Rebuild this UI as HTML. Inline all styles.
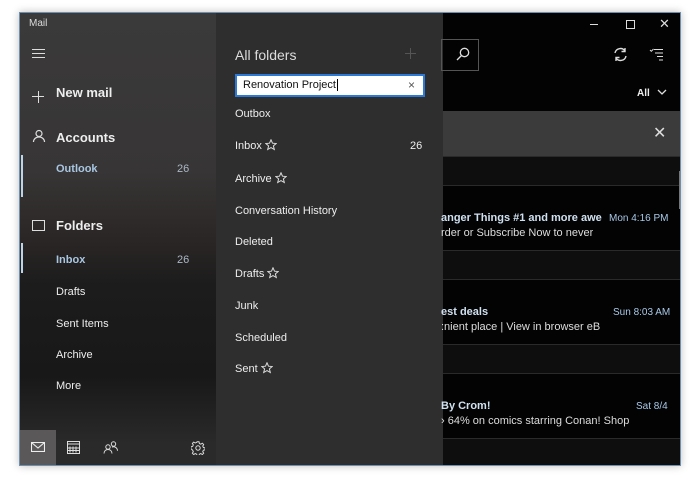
<!DOCTYPE html>
<html><head><style>
*{margin:0;padding:0;box-sizing:border-box}
body{width:698px;height:481px;background:#fff;font-family:"Liberation Sans",sans-serif;position:relative;overflow:hidden}
.win{position:absolute;left:19px;top:12px;width:662px;height:454px;background:#000;box-shadow:0 0 8px rgba(0,0,0,.25);border:1px solid #6d8fb0;overflow:hidden}
.side{position:absolute;left:0;top:0;width:196px;height:454px;background:linear-gradient(180deg,#3b3a3a 0%,#373535 35%,#2a2625 50%,#1c1c1c 60%,#181818 80%,#2a2a2a 95%)}
.t{position:absolute;color:#eee;white-space:nowrap;line-height:14px}
.fp{position:absolute;left:196px;top:0;width:227px;height:454px;background:#2e2e2e}
.fp .t{font-size:11px}
.ml{position:absolute;left:423px;top:0;width:239px;height:454px;background:#030303}
.ml .t{font-size:11px;overflow:hidden}
.band{position:absolute;left:0;width:239px;height:30px;background:#0e0e0e;border-top:1px solid #2a2a2a;border-bottom:1px solid #2a2a2a}
.st{display:inline-block;vertical-align:-2px;margin-left:3px}
</style></head><body>
<div class="win">
<div class="side">
<div class="t" style="left:9px;top:4px;font-size:10px;color:#ddd">Mail</div>
<div style="position:absolute;left:12px;top:36px;width:13px;height:1px;background:#ddd;box-shadow:0 4px 0 #ddd,0 8px 0 #ddd"></div>
<div style="position:absolute;left:12px;top:83px;width:12px;height:1.2px;background:#ddd"></div>
<div style="position:absolute;left:17.5px;top:77.5px;width:1.2px;height:12px;background:#ddd"></div>
<div class="t" style="left:36px;top:73px;font-size:13px;font-weight:bold">New mail</div>
<svg style="position:absolute;left:12px;top:116px" width="14" height="14" viewBox="0 0 14 14" fill="none" stroke="#ddd" stroke-width="1.2"><circle cx="7" cy="4.5" r="3"/><path d="M1.5 13c0-3 2.5-5 5.5-5s5.5 2 5.5 5"/></svg>
<div class="t" style="left:36px;top:118px;font-size:13px;font-weight:bold">Accounts</div>
<div style="position:absolute;left:1px;top:142px;width:2px;height:42px;background:#bcd4ea"></div>
<div class="t" style="left:36px;top:149px;font-size:11px;color:#a9c6e2;font-weight:bold">Outlook</div>
<div class="t" style="left:157px;top:149px;font-size:11px;color:#aab8c6">26</div>
<div style="position:absolute;left:12px;top:207px;width:13px;height:11px;border:1.2px solid #ddd"></div>
<div class="t" style="left:36px;top:206px;font-size:13px;font-weight:bold">Folders</div>
<div style="position:absolute;left:1px;top:230px;width:2px;height:30px;background:#bcd4ea"></div>
<div class="t" style="left:36px;top:240px;font-size:11px;color:#a9c6e2;font-weight:bold">Inbox</div>
<div class="t" style="left:157px;top:240px;font-size:11px;color:#aab8c6">26</div>
<div class="t" style="left:36px;top:272px;font-size:11px">Drafts</div>
<div class="t" style="left:36px;top:304px;font-size:11px">Sent Items</div>
<div class="t" style="left:36px;top:335px;font-size:11px">Archive</div>
<div class="t" style="left:36px;top:366px;font-size:11px">More</div>
<div style="position:absolute;left:0;top:417px;width:36px;height:37px;background:#5a5858"></div>
<svg style="position:absolute;left:11px;top:429px" width="14" height="10" viewBox="0 0 14 10" fill="none" stroke="#eee" stroke-width="1.1"><rect x=".5" y=".5" width="13" height="9"/><path d="M.5 .5L7 6l6.5-5.5"/></svg>
<svg style="position:absolute;left:47px;top:428px" width="13" height="13" viewBox="0 0 13 13" fill="none" stroke="#ddd" stroke-width="1"><rect x=".5" y=".5" width="12" height="12"/><path d="M.5 3h12M3 5.5v6M6 5.5v6M9 5.5v6M1 7h11M1 9.5h11"/></svg>
<svg style="position:absolute;left:83px;top:428px" width="15" height="13" viewBox="0 0 15 13" fill="none" stroke="#ddd" stroke-width="1"><circle cx="5" cy="6" r="2.2"/><path d="M1 12.5c0-2.5 1.8-4 4-4s4 1.5 4 4"/><circle cx="10.5" cy="3" r="2.2"/><path d="M9 6.2c.5-.3 1-.4 1.5-.4 2.2 0 4 1.5 4 4"/></svg>
<svg style="position:absolute;left:171px;top:428px" width="14" height="14" viewBox="0 0 14 14" fill="none" stroke="#ddd" stroke-width="1"><circle cx="7" cy="7" r="2.2"/><path d="M6 .8h2l.4 1.8 1.5.7 1.6-1 1.4 1.4-1 1.6.7 1.5 1.8.4v2l-1.8.4-.7 1.5 1 1.6-1.4 1.4-1.6-1-1.5.7-.4 1.8H6l-.4-1.8-1.5-.7-1.6 1-1.4-1.4 1-1.6-.7-1.5L-.4 8V6l1.8-.4.7-1.5-1-1.6 1.4-1.4 1.6 1 1.5-.7z" transform="translate(.3 0) scale(.96)"/></svg>
</div>
<div class="fp">
<div class="t" style="left:19px;top:35px;font-size:14px;color:#ddd">All folders</div>
<div style="position:absolute;left:189px;top:40px;width:11px;height:1px;background:#555"></div>
<div style="position:absolute;left:194px;top:35px;width:1px;height:11px;background:#555"></div>
<div style="position:absolute;left:19px;top:61px;width:190px;height:23px;background:#fff;border:2px solid #2c7ad6"></div>
<div class="t" style="left:27px;top:65px;font-size:11px;color:#111">Renovation Project<span style="border-left:1px solid #000;margin-left:1px"></span></div>
<div class="t" style="left:192px;top:65px;font-size:12px;color:#555">×</div>
<svg width="0" height="0" style="position:absolute"><defs><symbol id="s" viewBox="0 0 12 12"><path d="M6 .8l1.5 3.4 3.7.3-2.8 2.4.9 3.6L6 8.6 2.7 10.5l.9-3.6L.8 4.5l3.7-.3z" fill="none" stroke="#ddd" stroke-width="1"/></symbol></defs></svg>
<div class="t" style="left:19px;top:94px">Outbox</div>
<div class="t" style="left:19px;top:126px">Inbox<svg class="st" width="12" height="12"><use href="#s"/></svg></div>
<div class="t" style="left:194px;top:126px">26</div>
<div class="t" style="left:19px;top:159px">Archive<svg class="st" width="12" height="12"><use href="#s"/></svg></div>
<div class="t" style="left:19px;top:191px">Conversation History</div>
<div class="t" style="left:19px;top:222px">Deleted</div>
<div class="t" style="left:19px;top:254px">Drafts<svg class="st" width="12" height="12"><use href="#s"/></svg></div>
<div class="t" style="left:19px;top:286px">Junk</div>
<div class="t" style="left:19px;top:318px">Scheduled</div>
<div class="t" style="left:19px;top:349px">Sent<svg class="st" width="12" height="12"><use href="#s"/></svg></div>
</div>
<div class="ml">
<div style="position:absolute;left:147px;top:11px;width:8px;height:1px;background:#ddd"></div>
<div style="position:absolute;left:183px;top:7px;width:9px;height:9px;border:1px solid #ddd"></div>
<div class="t" style="left:216px;top:4px;font-size:13px;color:#ddd">✕</div>
<div style="position:absolute;left:-2px;top:26px;width:38px;height:32px;border:1px solid #555"></div>
<svg style="position:absolute;left:13px;top:34px" width="14" height="14" viewBox="0 0 14 14" fill="none" stroke="#ddd" stroke-width="1.3"><circle cx="8.5" cy="5.5" r="4.2"/><path d="M5.5 8.5L1 13"/></svg>
<svg style="position:absolute;left:170px;top:34px" width="15" height="15" viewBox="0 0 15 15" fill="none" stroke="#ddd" stroke-width="1.4"><path d="M2 6a5.5 5.5 0 0 1 10-2M13 9a5.5 5.5 0 0 1-10 2M12 1v3.5H8.5M3 14v-3.5h3.5"/></svg>
<svg style="position:absolute;left:206px;top:35px" width="14" height="13" viewBox="0 0 14 13" fill="none" stroke="#ddd" stroke-width="1"><path d="M5 1.5h9M6 5h8M8 8.5h6M10 12h4M1 2l1.3 1.3L4.5 1"/></svg>
<div class="t" style="left:194px;top:74px;font-size:10px;font-weight:bold">All</div>
<svg style="position:absolute;left:214px;top:76px" width="10" height="7" viewBox="0 0 10 7" fill="none" stroke="#ddd" stroke-width="1.3"><path d="M1 1l4 4 4-4"/></svg>
<div style="position:absolute;left:0;top:98px;width:239px;height:45px;background:#3b3b3b"></div>
<div class="t" style="left:210px;top:112px;font-size:16px;line-height:18px;color:#ddd">✕</div>
<div class="band" style="top:143px"></div>
<div class="band" style="top:237px"></div>
<div class="band" style="top:331px"></div>
<div class="band" style="top:425px"></div>
<div style="position:absolute;left:236px;top:158px;width:2px;height:38px;background:#777"></div>
<div class="t" style="left:-2px;top:198px;width:164px;color:#cfe0f0;font-weight:bold">anger Things #1 and more awe</div>
<div class="t" style="left:166px;top:199px;font-size:10px;color:#a9c8e8">Mon 4:16 PM</div>
<div class="t" style="left:-2px;top:213px;color:#ddd">rder or Subscribe Now to never</div>
<div class="t" style="left:-2px;top:292px;color:#cfe0f0;font-weight:bold">est deals</div>
<div class="t" style="left:170px;top:293px;font-size:10px;color:#a9c8e8">Sun 8:03 AM</div>
<div class="t" style="left:-2px;top:307px;width:162px;color:#ddd">:nient place | View in browser eB</div>
<div class="t" style="left:-2px;top:386px;color:#cfe0f0;font-weight:bold">By Crom!</div>
<div class="t" style="left:193px;top:387px;font-size:10px;color:#a9c8e8">Sat 8/4</div>
<div class="t" style="left:-2px;top:401px;width:188px;color:#ddd">› 64% on comics starring Conan! Shop</div>
</div>
</div>
</body></html>
